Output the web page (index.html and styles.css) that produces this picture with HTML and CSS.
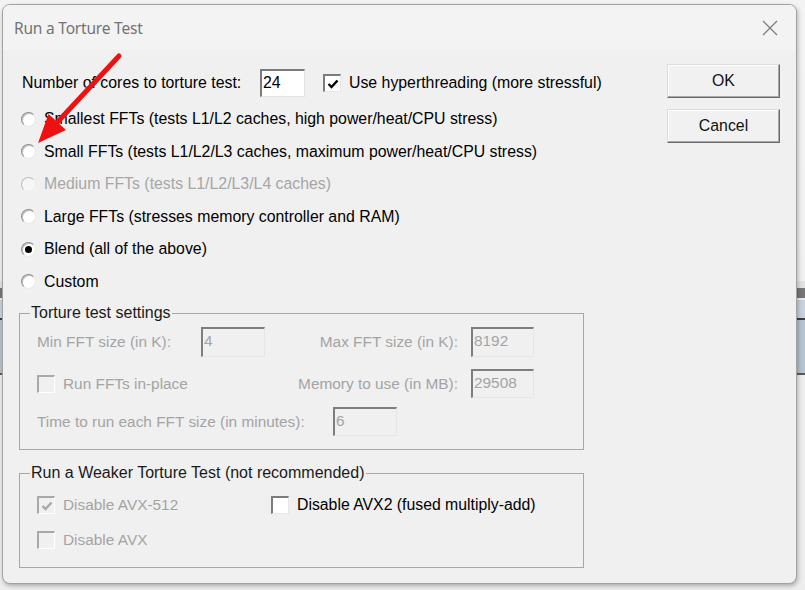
FILE: index.html
```html
<!DOCTYPE html>
<html>
<head>
<meta charset="utf-8">
<title>Run a Torture Test</title>
<link rel="stylesheet" href="styles.css">
</head>
<body>
<div class="dialog">
  <div class="titlebar">
    <span class="title">Run a Torture Test</span>
    <svg class="close" width="16" height="16" viewBox="0 0 16 16"><path d="M1 1 L15 15 M15 1 L1 15" stroke="#7a7a7a" stroke-width="1.2" fill="none"/></svg>
  </div>
  <div class="content">
    <div class="main">
      <div class="cores-row">
        <span class="cores-label">Number of cores to torture test:</span>
        <span class="edit cores-edit">24</span>
        <span class="check checked ht-check"><svg width="14" height="14" viewBox="0 0 14 14"><path d="M2.5 7 L5.5 10 L11.5 3.5" stroke="#000" stroke-width="2.4" fill="none"/></svg></span>
        <span class="ht-label">Use hyperthreading (more stressful)</span>
      </div>
      <div class="radios">
        <div class="radio-row"><span class="radio"></span><span>Smallest FFTs (tests L1/L2 caches, high power/heat/CPU stress)</span></div>
        <div class="radio-row"><span class="radio"></span><span>Small FFTs (tests L1/L2/L3 caches, maximum power/heat/CPU stress)</span></div>
        <div class="radio-row disabled"><span class="radio"></span><span>Medium FFTs (tests L1/L2/L3/L4 caches)</span></div>
        <div class="radio-row"><span class="radio"></span><span>Large FFTs (stresses memory controller and RAM)</span></div>
        <div class="radio-row"><span class="radio selected"></span><span>Blend (all of the above)</span></div>
        <div class="radio-row"><span class="radio"></span><span>Custom</span></div>
      </div>
      <fieldset class="group settings">
        <legend>Torture test settings</legend>
        <div class="settings-grid">
          <span class="dis-label">Min FFT size (in K):</span>
          <span class="edit dis-edit tall">4</span>
          <span class="dis-label right">Max FFT size (in K):</span>
          <span class="edit dis-edit tall">8192</span>
        </div>
        <div class="settings-grid row2">
          <span class="span2"><span class="check dis-check"></span><span class="dis-label">Run FFTs in-place</span></span>
          <span class="dis-label right">Memory to use (in MB):</span>
          <span class="edit dis-edit">29508</span>
        </div>
        <div class="time-row">
          <span class="dis-label time-label">Time to run each FFT size (in minutes):</span>
          <span class="edit dis-edit">6</span>
        </div>
      </fieldset>
      <fieldset class="group weaker">
        <legend>Run a Weaker Torture Test (not recommended)</legend>
        <div class="weak-row">
          <span class="weak-cell"><span class="check dis-check"><svg width="14" height="14" viewBox="0 0 14 14"><path d="M2.5 7 L5.5 10 L11.5 3.5" stroke="#a8a8a8" stroke-width="2.4" fill="none"/></svg></span><span class="dis-label">Disable AVX-512</span></span>
          <span class="weak-cell"><span class="check"></span><span class="avx2">Disable AVX2 (fused multiply-add)</span></span>
        </div>
        <div class="weak-row second">
          <span class="weak-cell"><span class="check dis-check"></span><span class="dis-label">Disable AVX</span></span>
        </div>
      </fieldset>
    </div>
    <div class="buttons">
      <div class="btn">OK</div>
      <div class="btn">Cancel</div>
    </div>
  </div>
</div>
<svg class="arrow" width="805" height="590" viewBox="0 0 805 590">
  <line x1="119" y1="56" x2="58" y2="121.5" stroke="#ee1111" stroke-width="5" stroke-linecap="round"/>
  <polygon points="38,143 48.5,114 66,130" fill="#ee1111"/>
</svg>
</body>
</html>
```
FILE: styles.css
```css
* { box-sizing: border-box; }
html, body { margin: 0; }
body {
  width: 805px;
  height: 590px;
  overflow: hidden;
  position: relative;
  padding: 4px 0 0 2px;
  font-family: "Liberation Sans", Arial, sans-serif;
  font-size: 15.85px;
  color: #000;
  background: linear-gradient(to bottom,
    #f3f3f3 0, #f0f0f0 281px, #e2e2e2 281px, #e2e2e2 288px,
    #777 288px, #777 298px, #ececec 298px, #ececec 300px,
    #c7d2de 300px, #c7d2de 318px, #3f3f3f 318px, #3f3f3f 320px,
    #b5c2cf 320px, #b5c2cf 373px, #5a5a5a 373px, #5a5a5a 375px,
    #ededed 375px, #ededed 100%);
}
.dialog {
  width: 795px;
  height: 580px;
  background: #f0f0f0;
  border: 1px solid #a2a2a2;
  border-radius: 8px;
  box-shadow: 1px 2px 4px rgba(0,0,0,0.28);
  overflow: hidden;
  display: flex;
  flex-direction: column;
}
.titlebar {
  height: 45px;
  flex: none;
  background: #f3f3f3;
  display: flex;
  align-items: center;
  padding: 0 18px 0 11px;
}
.title {
  font-family: "Noto Sans", "Open Sans", sans-serif;
  font-size: 15.5px;
  color: #737373;
  letter-spacing: -0.2px;
}
.close { margin-left: auto; }
.content {
  flex: 1;
  display: flex;
  align-items: flex-start;
}
.main {
  padding: 18px 0 0 16px;
  width: 620px;
  flex: none;
}
.cores-row {
  height: 28px;
  display: flex;
  align-items: center;
  white-space: nowrap;
  margin-top: 1px;
}
.cores-row > * { flex: none; }
.cores-label {
  width: 238px;
  margin-left: 3px;
}
.edit {
  display: block;
  background: #fff;
  border-style: solid;
  border-width: 2px 1px 1px 2px;
  border-color: #7b7b7b #e3e3e3 #e3e3e3 #7b7b7b;
  padding: 3px 0 0 1px;
  line-height: 18px;
  height: 29px;
}
.cores-edit { width: 45px; height: 28px; }
.check {
  display: flex;
  align-items: center;
  justify-content: center;
  width: 18px;
  height: 18px;
  flex: none;
  background: #fff;
  border-style: solid;
  border-width: 2px 1px 1px 2px;
  border-color: #7b7b7b #e6e6e6 #e6e6e6 #7b7b7b;
}
.ht-check { margin-left: 18px; }
.ht-label { margin-left: 8px; }
.radios { margin-top: 6px; }
.radio-row {
  height: 32.5px;
  display: flex;
  align-items: center;
  padding-left: 2px;
  white-space: nowrap;
}
.radio {
  width: 15px;
  height: 15px;
  border-radius: 50%;
  background: #fff;
  border: 1px solid;
  border-color: #8c8c8c #e8e8e8 #e8e8e8 #8c8c8c;
  box-shadow: inset 1px 1px 0 #c4c4c4;
  margin-right: 8px;
  flex: none;
  display: flex;
  align-items: center;
  justify-content: center;
}
.radio.selected::after {
  content: "";
  width: 7px;
  height: 7px;
  border-radius: 50%;
  background: #000;
}
.radio-row.disabled { color: #a6a6a6; }
.radio-row.disabled .radio {
  background: #f6f6f6;
  border-color: #bdbdbd #eeeeee #eeeeee #bdbdbd;
  box-shadow: none;
}
.group {
  margin: 6px 0 0 0;
  padding: 0;
  width: 565px;
  border: 1px solid #a7a7a7;
  min-width: 0;
}
.group legend {
  margin-left: 10px;
  padding: 0 1px;
  line-height: 18px;
  color: #1a1a1a;
  font-size: 16px;
}
.dis-label {
  color: #a4a4a4;
  font-size: 15.4px;
  white-space: nowrap;
}
.dis-edit {
  background: #f0f0f0;
  color: #a4a4a4;
  font-size: 15.4px;
  border-color: #7e7e7e #e6e6e6 #e6e6e6 #7e7e7e;
}
.dis-check {
  background: #f0f0f0;
  border-color: #a9a9a9 #ffffff #ffffff #a9a9a9;
}
.settings-grid {
  display: grid;
  grid-template-columns: 164px 64px 206px 63px;
  align-items: center;
  padding-left: 17px;
  margin-top: 5px;
}
.settings-grid .tall { height: 30px; }
.settings-grid.row2 { margin-top: 12px; }
.settings-grid .right { text-align: right; padding-right: 13px; }
.span2 {
  grid-column: span 2;
  display: flex;
  align-items: center;
}
.span2 .dis-label { margin-left: 8px; }
.time-row {
  display: flex;
  align-items: center;
  padding-left: 17px;
  margin-top: 9px;
  margin-bottom: 13px;
}
.time-label { width: 296px; }
.time-row .edit { width: 64px; }
.group.weaker { margin-top: 14px; }
.weak-row {
  display: flex;
  align-items: center;
  padding-left: 17px;
  margin-top: 14px;
  height: 18px;
}
.weak-row.second { margin-top: 17px; margin-bottom: 18px; }
.weak-cell {
  display: flex;
  align-items: center;
  width: 234px;
}
.weak-cell .dis-label { margin-left: 8px; }
.avx2 { margin-left: 8px; white-space: nowrap; font-size: 15.8px; }
.buttons {
  margin-left: auto;
  padding: 14px 16px 0 0;
  display: flex;
  flex-direction: column;
  gap: 11px;
}
.btn {
  width: 113px;
  height: 34px;
  display: flex;
  align-items: center;
  justify-content: center;
  background: #f1f1f1;
  border: 1px solid;
  border-color: #dcdcdc #6a6a6a #6a6a6a #dcdcdc;
  box-shadow: inset -1px -1px 0 #a8a8a8, inset 1px 1px 0 #ffffff;
  color: #111;
}
.arrow {
  position: absolute;
  left: 0;
  top: 0;
  pointer-events: none;
}
```
